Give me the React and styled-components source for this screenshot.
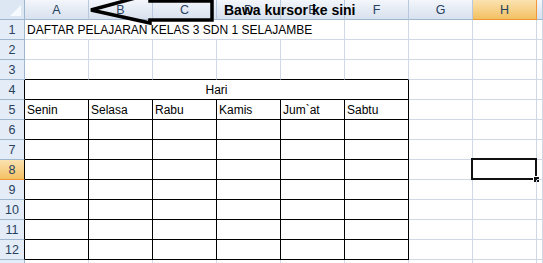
import React from "react";
import styled, { createGlobalStyle, css } from "styled-components";

const GRID = "#d0d7e5";
const HEAD_LINE = "#9eb6ce";
const INK = "#000";

const Global = createGlobalStyle`
  html, body {
    margin: 0;
    padding: 0;
    background: #fff;
    overflow: hidden;
  }
  body {
    font-family: "Liberation Sans", Arial, sans-serif;
  }
`;

const Screen = styled.div`
  position: relative;
  width: 543px;
  height: 263px;
  overflow: hidden;
`;

const Sheet = styled.div`
  display: grid;
  grid-template-columns: 25px repeat(8, 64px) 1fr;
  grid-auto-rows: 20px;
`;

const Corner = styled.div`
  position: relative;
  box-sizing: border-box;
  background: #dde7f4;
  border-right: 1px solid ${HEAD_LINE};
  border-bottom: 1px solid ${HEAD_LINE};
  &::after {
    content: "";
    position: absolute;
    right: 3px;
    bottom: 3px;
    width: 0;
    height: 0;
    border-left: 11px solid transparent;
    border-bottom: 11px solid #f6f9fd;
  }
`;

const ColHead = styled.div`
  box-sizing: border-box;
  display: flex;
  align-items: center;
  justify-content: center;
  font-size: 12.5px;
  color: #27415f;
  background: linear-gradient(#f3f6fb, #e2e9f3 60%, #d8e1ee);
  border-right: 1px solid #b8c9dd;
  border-bottom: 1px solid ${HEAD_LINE};
  padding-top: 1px;
  ${(p) =>
    p.$active &&
    css`
      background: linear-gradient(#fbe2b1, #f7d28a 50%, #f2c161);
      border-right-color: #f29536;
      border-bottom: 1px solid #f29536;
    `}
`;

const RowHead = styled.div`
  box-sizing: border-box;
  display: flex;
  align-items: center;
  justify-content: center;
  font-size: 12.5px;
  color: #27415f;
  background: #e4ecf7;
  border-right: 1px solid ${(p) => (p.$edge ? INK : HEAD_LINE)};
  border-bottom: 1px solid ${HEAD_LINE};
  padding-top: 1px;
  ${(p) =>
    p.$active &&
    css`
      background: linear-gradient(#fbe2b1, #f7d28a 50%, #f2c161);
      border-bottom-color: #f29536;
    `}
`;

const Cell = styled.div`
  position: relative;
  box-sizing: border-box;
  display: flex;
  align-items: flex-end;
  justify-content: ${(p) => (p.$center ? "center" : "flex-start")};
  padding: 0 2px 2px;
  font-size: 12px;
  color: #000;
  white-space: nowrap;
  grid-column: span ${(p) => p.$span || 1};
  border-right: 1px solid ${(p) => p.$right || GRID};
  border-bottom: 1px solid ${(p) => p.$bottom || GRID};
`;

const Selection = styled.div`
  position: absolute;
  left: -2px;
  top: -2px;
  right: -1px;
  bottom: -1px;
  border: 2px solid #111;
  &::after {
    content: "";
    position: absolute;
    right: -4px;
    bottom: -4px;
    width: 5px;
    height: 5px;
    background: #111;
    border: 1px solid #fff;
    border-width: 1px 0 0 1px;
  }
`;

const Callout = styled.div`
  position: absolute;
  left: 224px;
  top: 2px;
  font-size: 14px;
  font-weight: bold;
  color: #000;
  white-space: nowrap;
`;

const Arrow = styled.svg`
  position: absolute;
  left: 0;
  top: 0;
  pointer-events: none;
`;

const COLS = ["A", "B", "C", "D", "E", "F", "G", "H"];
const DAYS = ["Senin", "Selasa", "Rabu", "Kamis", "Jum`at", "Sabtu"];

function tableBorders(row, ci) {
  const inTable = ci < 6;
  if (row >= 4 && row <= 12 && inTable) return { $right: INK, $bottom: INK };
  if (row === 3 && inTable) return { $bottom: INK };
  return {};
}

function renderRow(row) {
  const head = (
    <RowHead key={`h${row}`} $edge={row >= 4 && row <= 12} $active={row === 8}>
      {row}
    </RowHead>
  );
  const tail = <Cell key={`t${row}`} />;

  if (row === 1) {
    return [
      head,
      <Cell key="a1" $span={5}>
        DAFTAR PELAJARAN KELAS 3 SDN 1 SELAJAMBE
      </Cell>,
      ...["F", "G", "H"].map((c) => <Cell key={`${c}1`} />),
      tail,
    ];
  }

  if (row === 4) {
    return [
      head,
      <Cell key="a4" $span={6} $center $right={INK} $bottom={INK}>
        Hari
      </Cell>,
      <Cell key="g4" />,
      <Cell key="h4" />,
      tail,
    ];
  }

  return [
    head,
    ...COLS.map((c, ci) => (
      <Cell key={`${c}${row}`} {...tableBorders(row, ci)}>
        {row === 5 && ci < 6 ? DAYS[ci] : null}
        {row === 8 && c === "H" ? <Selection /> : null}
      </Cell>
    )),
    tail,
  ];
}

export default function App() {
  const rows = Array.from({ length: 13 }, (_, i) => i + 1);
  return (
    <Screen>
      <Global />
      <Sheet>
        <Corner />
        {COLS.map((c) => (
          <ColHead key={c} $active={c === "H"}>
            {c}
          </ColHead>
        ))}
        <ColHead />
        {rows.map(renderRow)}
      </Sheet>
      <Arrow width="543" height="40" viewBox="0 0 543 40">
        <polyline
          points="150,-6 91,10 150,23 150,20 212,20 212,1 150,1 150,-6"
          fill="none"
          stroke="#000"
          strokeWidth="3.5"
          strokeLinejoin="miter"
        />
      </Arrow>
      <Callout>Bawa kursor ke sini</Callout>
    </Screen>
  );
}
